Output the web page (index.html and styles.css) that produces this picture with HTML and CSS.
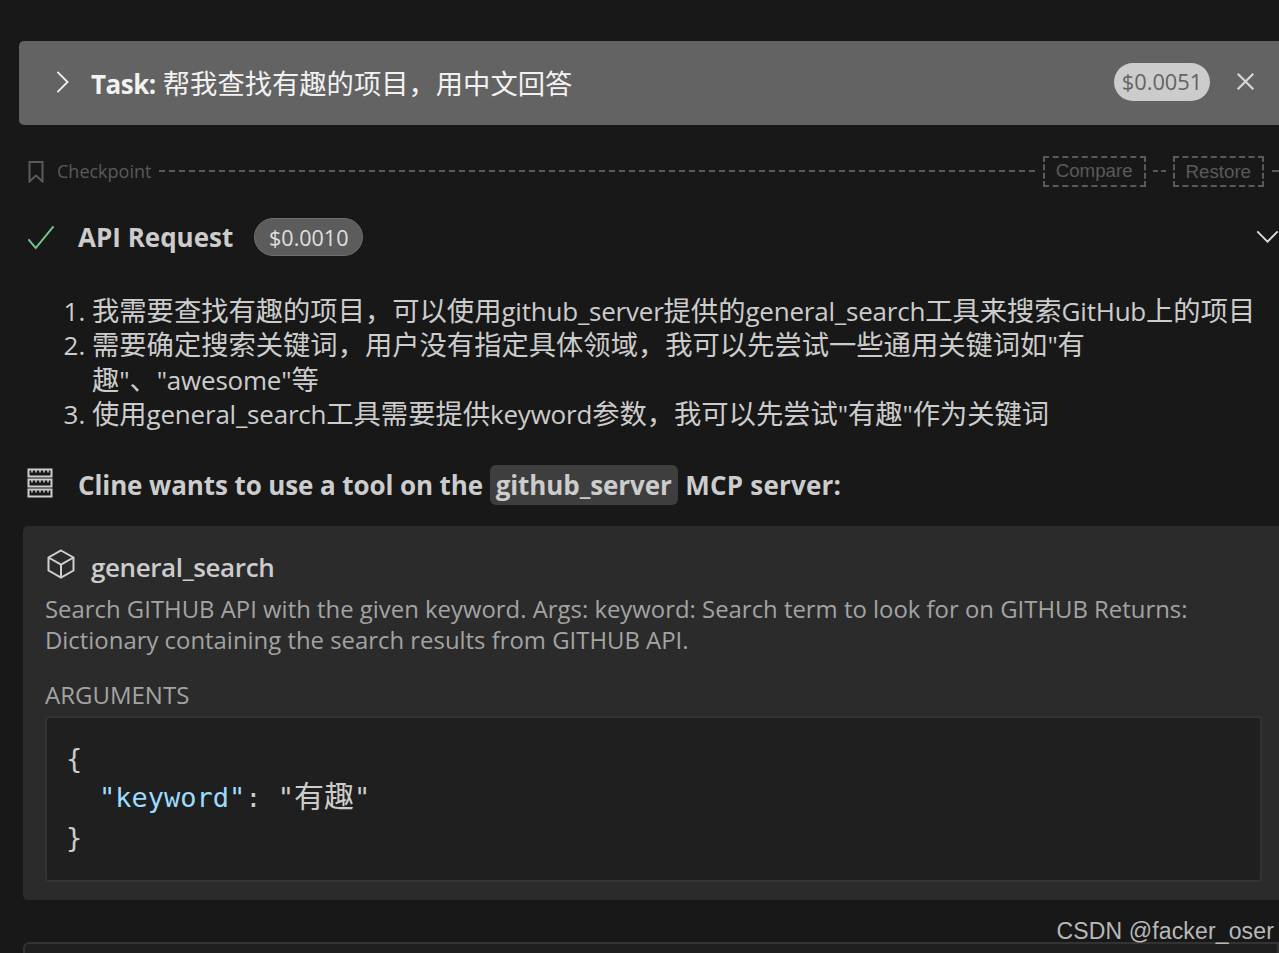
FILE: index.html
```html
<!DOCTYPE html>
<html lang="zh">
<head>
<meta charset="utf-8">
<title>Cline</title>
<link rel="stylesheet" href="styles.css">
</head>
<body>
<main class="chat">
  <header class="task">
    <svg class="task-chevron" viewBox="0 0 16 26"><path d="M2.500 2 13.500 13 2.500 24"/></svg>
    <div class="task-title"><b class="task-label">Task:</b> 帮我查找有趣的项目，用中文回答</div>
    <span class="task-cost">$0.0051</span>
    <svg class="task-close" viewBox="0 0 22 22"><path d="M2 2 20 20M20 2 2 20"/></svg>
  </header>

  <div class="checkpoint">
    <svg class="bookmark" viewBox="0 0 16 22"><path d="M1.500 1h13v19.500L8 14.500 1.500 20.500z"/></svg>
    <span class="checkpoint-label">Checkpoint</span>
    <span class="dash dash-long"></span>
    <span class="cp-btn">Compare</span>
    <span class="dash dash-short"></span>
    <span class="cp-btn cp-restore">Restore</span>
    <span class="dash dash-end"></span>
  </div>

  <div class="request">
    <svg class="check" viewBox="0 0 28 26"><path d="M1 15 8.500 24 27 1.500"/></svg>
    <b class="request-title">API Request</b>
    <span class="request-cost">$0.0010</span>
    <svg class="request-chevron" viewBox="0 0 24 14"><path d="M1 1.500 12 12.500 23 1.500"/></svg>
  </div>

  <ol class="thoughts">
    <li>我需要查找有趣的项目，可以使用<span class="lat">github_server</span>提供的<span class="lat">general_search</span>工具来搜索<span class="lat">GitHub</span>上的项目</li>
    <li>需要确定搜索关键词，用户没有指定具体领域，我可以先尝试一些通用关键词如<span class="lat">"</span>有<br>趣<span class="lat">"</span>、<span class="lat">"awesome"</span>等</li>
    <li>使用<span class="lat">general_search</span>工具需要提供<span class="lat">keyword</span>参数，我可以先尝试<span class="lat">"</span>有趣<span class="lat">"</span>作为关键词</li>
  </ol>

  <div class="tool-heading">
    <svg class="server" viewBox="0 0 26 30"><path d="M1.500 1.500h23v7h-23zM1.500 11.500h23v7h-23zM1.500 21.500h23v7h-23z"/><path class="server-ticks" d="M5 1.500v3M9 1.500v3M13 1.500v3M17 1.500v3M21 1.500v3M5 11.500v3M9 11.500v3M13 11.500v3M17 11.500v3M21 11.500v3M5 21.500v3M9 21.500v3M13 21.500v3M17 21.500v3M21 21.500v3"/></svg>
    <b class="tool-heading-text">Cline wants to use a tool on the <code class="server-name">github_server</code> <span class="mcp-tail">MCP server:</span></b>
  </div>

  <section class="tool-card">
    <div class="tool-name-row">
      <svg class="cube" viewBox="0 0 28 30"><path d="M14 1.500 26.500 8.500v13L14 28.500 1.500 21.500v-13zM1.500 8.500 14 15.500 26.500 8.500M14 15.500v13"/></svg>
      <span class="tool-name">general_search</span>
    </div>
    <p class="tool-desc">Search GITHUB API with the given keyword. Args: keyword: Search term to look for on GITHUB Returns: Dictionary containing the search results from GITHUB API.</p>
    <div class="args-label">ARGUMENTS</div>
    <div class="args-code">
      <div class="code-line">{</div>
      <div class="code-line code-indent"><span class="json-key">"keyword"</span>: "<span class="json-cjk">有趣</span>"</div>
      <div class="code-line">}</div>
    </div>
  </section>

  <div class="next-card"></div>
</main>
<span class="watermark">CSDN @facker_oser</span>
</body>
</html>
```
FILE: styles.css
```css
* { box-sizing: border-box; }
html, body { margin: 0; height: 100%; }
body {
  position: relative;
  width: 1279px;
  height: 953px;
  overflow: hidden;
  background: #181818;
  color: #cccccc;
  font-family: "Open Sans", "Noto Sans CJK SC", sans-serif;
  font-size: 26px;
}
b { font-weight: 700; }
svg { fill: none; stroke: currentColor; flex: none; display: block; }

.chat { padding: 41px 0 0 19px; width: 1279px; }

.task {
  display: flex;
  align-items: center;
  height: 84px;
  width: 1270px;
  padding-left: 36px;
  background: #636363;
  border-radius: 5px 0 0 5px;
  color: #f2f2f2;
}
.task-chevron { width: 15px; height: 24px; stroke-width: 2; margin-top: -3px; color: #f0f0f0; }
.task-title { margin: 2px 0 0 21px; font-size: 27.3px; line-height: 36px; flex: 1; white-space: nowrap; }
.task-label { font-size: 26px; letter-spacing: -.5px; }
.task-cost {
  display: flex; align-items: center; justify-content: center;
  width: 96px; height: 38px; border-radius: 19px;
  background: #cccccc; color: #636363;
  font-size: 21.800px; margin-top: -3px;
}
.task-close { width: 19px; height: 19px; margin: -3px 34px 0 26px; stroke-width: 2.600; color: #d6d6d6; }

.checkpoint {
  display: flex;
  align-items: center;
  height: 32px;
  margin: 30px 0 0 9px;
  width: 1251px;
  color: #5a5a5a;
}
.bookmark { width: 16px; height: 22px; stroke-width: 2; margin-top: 1px; }
.checkpoint-label { margin-left: 13px; font-size: 18px; line-height: 26px; white-space: nowrap; }
.dash { height: 0; border-top: 2px dashed #5a5a5a; }
.dash-long { flex: 1; margin: 0 8px; }
.dash-short { width: 13px; margin: 0 7px; }
.dash-end { width: 7px; margin-left: 8px; }
.cp-btn {
  display: flex; align-items: center;
  height: 31px; padding: 0 11px;
  border: 2px dashed #5a5a5a;
  font-family: "Liberation Sans", sans-serif;
  font-size: 18.700px;
}
.cp-restore { margin-top: 1px; }

.request {
  display: flex;
  align-items: center;
  height: 38px;
  margin: 31px 0 0 8px;
  width: 1252px;
}
.check { width: 28px; height: 25px; stroke-width: 2; color: #73c991; }
.request-title { margin-left: 23px; font-size: 26px; white-space: nowrap; color: #cccccc; }
.request-cost {
  display: flex; align-items: center; justify-content: center;
  width: 109px; height: 38px; margin-left: 21px;
  border-radius: 19px; border: 1px solid #6e6e6e;
  background: #5c5c5c; color: #e0e0e0; font-size: 21.500px;
}
.request-chevron { width: 23px; height: 13px; margin: -2px 0 0 auto; stroke-width: 2; color: #dcdcdc; }

.thoughts {
  margin: 38px 0 0;
  padding: 0 0 0 73px;
  font-size: 27.3px;
  line-height: 34.400px;
  white-space: nowrap;
}
.thoughts li::marker { font-size: 26px; }
.lat { font-size: 26px; letter-spacing: -.22px; }
.tool-heading {
  display: flex;
  align-items: center;
  height: 40px;
  margin: 33px 0 0 8px;
}
.server { width: 26px; height: 30px; stroke-width: 2; margin-top: -3px; }
.server-ticks { stroke-width: 1.500; }
.tool-heading-text { margin-left: 25px; font-size: 26px; white-space: nowrap; letter-spacing: -.1px; }
.mcp-tail { letter-spacing: .2px; margin-left: 1px; }
.server-name {
  display: inline-block;
  padding: 0 6px;
  background: #3e3e3e;
  border-radius: 6px;
  font-family: inherit;
  line-height: 40px;
}

.tool-card {
  margin: 21px 0 0 4px;
  height: 374px;
  width: 1260px;
  padding: 20px 0 0 22px;
  background: #2b2b2b;
  border-radius: 5px 0 0 5px;
}
.tool-name-row { display: flex; align-items: center; height: 42px; }
.cube { width: 28px; height: 30px; stroke-width: 2; margin: -6px 0 0 2px; color: #d0d0d0; }
.tool-name { margin-left: 16px; font-size: 26px; font-weight: 600; white-space: nowrap; color: #cccccc; letter-spacing: -.4px; }
.tool-desc {
  margin: 5px 0 0;
  width: 1180px;
  font-size: 23.900px;
  line-height: 31px;
  color: #a3a3a3;
}
.args-label { margin-top: 24px; font-size: 24px; line-height: 32px; color: #a3a3a3; }
.args-code {
  margin: 5px 0 0;
  width: 1217px;
  height: 166px;
  padding: 21px 0 0 19px;
  background: #1f1f1f;
  border: 2px solid #333333;
  border-radius: 4px;
  font-family: "DejaVu Sans Mono", "Noto Sans CJK SC", monospace;
  font-size: 27px;
  line-height: 39.500px;
  color: #cccccc;
}
.code-indent { padding-left: 33px; }
.json-key { color: #9cdcfe; }
.json-cjk { font-family: "Noto Sans CJK SC", sans-serif; font-size: 30px; line-height: 30px; }

.next-card {
  margin: 42px 0 0 4px;
  height: 40px;
  background: #1f1f1f;
  border: 2px solid #333333;
  border-radius: 6px 0 0 0;
}
.watermark {
  position: absolute;
  right: 5px;
  top: 916px;
  font-family: "Liberation Sans", sans-serif;
  font-size: 23px;
  line-height: 30px;
  color: #b8b8b8;
  letter-spacing: .15px;
}
```
